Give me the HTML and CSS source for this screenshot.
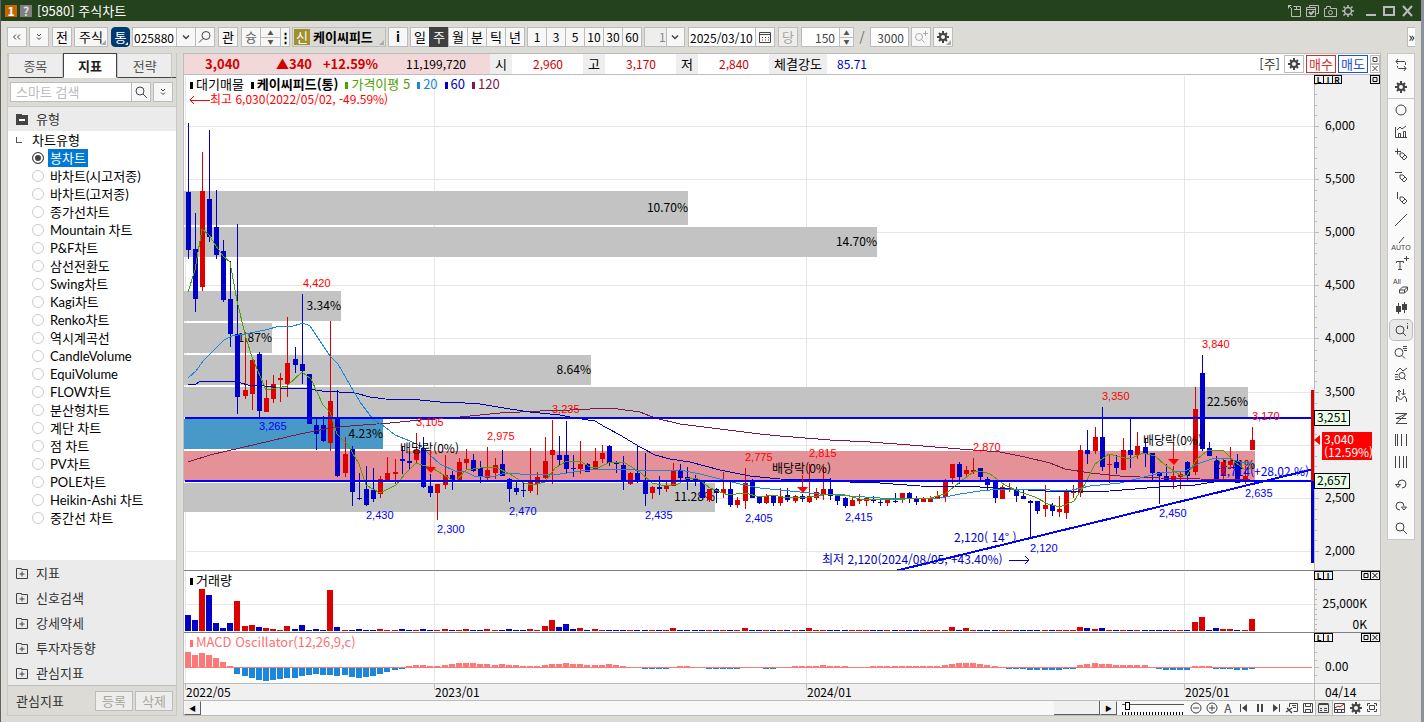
FILE: index.html
```html
<!DOCTYPE html>
<html lang="ko">
<head>
    <meta charset="UTF-8">
    <meta name="viewport" content="width=device-width, initial-scale=1.0">
    <title>[9580] 주식차트</title>
    <link rel="stylesheet" href="styles.css">
</head>
<body>
    <!-- shared icons -->
    <svg class="sprite" aria-hidden="true">
        <symbol id="gear" viewBox="0 0 16 16">
            <circle cx="8" cy="8" r="3" fill="none" stroke="currentColor" stroke-width="2"/>
            <path d="M8 2v3M8 11v3M2 8h3M11 8h3M4 4l1.500 1.500M10.500 10.500L12 12M12 4l-1.500 1.500M5.500 10.500L4 12" stroke="currentColor" stroke-width="2"/>
        </symbol>
        <symbol id="mag" viewBox="0 0 16 16"><circle cx="7" cy="7" r="4"/><path d="M10 10l4 4"/></symbol>
        <symbol id="magleft" viewBox="0 0 16 16"><circle cx="9" cy="6.500" r="4"/><path d="M6 9.500l-4 4"/></symbol>
        <symbol id="plusbox" viewBox="0 0 16 16"><path d="M2.500 3.500h5v1h6v9h-11zM8 6.500v5M5.500 9h5"/></symbol>
        <symbol id="down" viewBox="0 0 16 16"><path d="M5 6.500l3 3 3-3" stroke-width="1.500"/></symbol>
        <symbol id="ddown" viewBox="0 0 16 16"><path d="M6 5l2 2 2-2M6 8.500l2 2 2-2"/></symbol>
        <symbol id="pencil" viewBox="0 0 16 16"><path d="M7 7h3l4 4-3 3-4-4zM9 12l3-3"/></symbol>
        <symbol id="square" viewBox="0 0 8 7"><path d="M2 1.500h4v4H2z"/></symbol>
        <symbol id="cross" viewBox="0 0 8 7"><path d="M1.500 1l5 5M6.500 1l-5 5"/></symbol>
    </svg>

    <header class="titlebar">
        <span class="badge badge-num">1</span>
        <span class="badge badge-help">?</span>
        <h1 class="title">[9580] 주식차트</h1>
        <div class="win-buttons">
            <button aria-label="분리"><svg viewBox="0 0 16 16"><path d="M5.500 5.500v8h9v-10h-7M8 6.500h6M2 2l4 4M2.500 5.500v-3h3M10.500 4v2"/></svg></button>
            <button aria-label="복사"><svg viewBox="0 0 16 16"><path d="M5.500 4V2.500h9v8h-2M2.500 4.500h9v9h-9zM2.500 6.500h9"/><path d="M5 9l2 2 3-3" stroke-width="2"/></svg></button>
            <button aria-label="캡처"><svg viewBox="0 0 16 16"><path d="M2.500 5.500h2v-2h4v2h6v8h-12z"/><circle cx="8.500" cy="9.500" r="2"/></svg></button>
            <button aria-label="설정"><svg viewBox="0 0 16 16"><circle cx="8" cy="8" r="3.500" stroke-width="1.500"/><path d="M8 2v2M8 12v2M2 8h2M12 8h2M3.500 3.500L5 5M11 11l1.500 1.500M12.500 3.500L11 5M5 11l-1.500 1.500" stroke-width="1.500"/></svg></button>
            <button aria-label="최소화" class="big first"><svg viewBox="0 0 16 16"><path d="M3 12h10"/></svg></button>
            <button aria-label="최대화" class="big"><svg viewBox="0 0 16 16"><path d="M3 4h10v8H3z"/></svg></button>
            <button aria-label="닫기" class="big"><svg viewBox="0 0 16 16"><path d="M4 3l9 10M13 3L4 13"/></svg></button>
        </div>
    </header>

    <nav class="toolbar">
        <button class="tb" aria-label="접기"><svg viewBox="0 0 16 16"><path d="M7 5.500L4.500 8 7 10.500M11 5.500L8.500 8l2.500 2.500"/></svg></button>
        <button class="tb" aria-label="펼치기"><svg><use href="#ddown"/></svg></button>
        <button class="tb gap-left">전</button>
        <button class="tb w34 corner">주식</button>
        <button class="tb tong corner gap-left">통</button>
        <div class="joined">
            <input class="field code" type="text" value="025880" aria-label="종목코드">
            <button class="tb" aria-label="최근 종목"><svg><use href="#down"/></svg></button>
            <button class="tb" aria-label="종목 찾기"><svg><use href="#magleft"/></svg></button>
        </div>
        <button class="tb gap-left">관</button>
        <div class="joined gap-left">
            <button class="tb gray">슝</button>
            <span class="spin"><button aria-label="위">▲</button><button aria-label="아래">▼</button></span>
            <button class="tb w10" aria-label="더보기">⋮</button>
        </div>
        <button class="stock corner"><span class="sin">신</span><b>케이씨피드</b></button>
        <button class="tb"><b>i</b></button>
        <div class="joined">
            <button class="tb">일</button>
            <button class="tb active">주</button>
            <button class="tb">월</button>
            <button class="tb">분</button>
            <button class="tb">틱</button>
            <button class="tb">년</button>
        </div>
        <div class="joined minutes">
            <button class="tb">1</button>
            <button class="tb">3</button>
            <button class="tb">5</button>
            <button class="tb">10</button>
            <button class="tb">30</button>
            <button class="tb">60</button>
        </div>
        <div class="selectbox">
            <select aria-label="주기" disabled><option>1</option></select>
            <svg><use href="#down"/></svg>
        </div>
        <div class="joined gap-left">
            <input class="field date" type="text" value="2025/03/10" aria-label="날짜">
            <button class="tb" aria-label="달력"><svg viewBox="0 0 16 16"><path d="M2.500 3.500h11v10h-11zM2.500 5.500h11"/><path d="M5 8.500h7M5 11h7" stroke-dasharray="1 2"/></svg></button>
        </div>
        <button class="tb dim gap-left">당</button>
        <div class="joined gap-left">
            <input class="field num" type="text" value="150" aria-label="봉 개수">
            <span class="spin small"><button aria-label="증가">▲</button><button aria-label="감소">▼</button></span>
        </div>
        <span class="slash">/</span>
        <input class="field num" type="text" value="3000" aria-label="전체 개수">
        <button class="tb faint" aria-label="확대"><svg viewBox="0 0 16 16"><circle cx="6" cy="8" r="3.500"/><path d="M8.500 10.500l3 3M10 4.500h5M12.500 2v5"/></svg></button>
        <button class="tb corner" aria-label="차트 설정"><svg><use href="#gear"/></svg></button>
        <button class="more" aria-label="더보기">»</button>
    </nav>

    <main class="main">
        <aside class="sidebar">
            <div class="tabs">
                <button>종목</button>
                <button class="on">지표</button>
                <button>전략</button>
            </div>
            <div class="search">
                <input type="text" placeholder="스마트 검색" aria-label="스마트 검색">
                <button aria-label="검색"><svg><use href="#mag"/></svg></button>
                <button class="last" aria-label="펼치기"><svg><use href="#ddown"/></svg></button>
            </div>
            <button class="group open"><svg viewBox="0 0 16 16"><path class="solid" d="M2 3h6v1h6v10H2z"/><path class="cut" d="M5 9h6"/></svg>유형</button>
            <div class="tree">
                <p class="tree-title">차트유형</p>
                <label class="sel"><input type="radio" name="type" checked><span>봉차트</span></label>
                <label><input type="radio" name="type"><span>바차트(시고저종)</span></label>
                <label><input type="radio" name="type"><span>바차트(고저종)</span></label>
                <label><input type="radio" name="type"><span>종가선차트</span></label>
                <label><input type="radio" name="type"><span>Mountain 차트</span></label>
                <label><input type="radio" name="type"><span>P&amp;F차트</span></label>
                <label><input type="radio" name="type"><span>삼선전환도</span></label>
                <label><input type="radio" name="type"><span>Swing차트</span></label>
                <label><input type="radio" name="type"><span>Kagi차트</span></label>
                <label><input type="radio" name="type"><span>Renko차트</span></label>
                <label><input type="radio" name="type"><span>역시계곡선</span></label>
                <label><input type="radio" name="type"><span>CandleVolume</span></label>
                <label><input type="radio" name="type"><span>EquiVolume</span></label>
                <label><input type="radio" name="type"><span>FLOW차트</span></label>
                <label><input type="radio" name="type"><span>분산형차트</span></label>
                <label><input type="radio" name="type"><span>계단 차트</span></label>
                <label><input type="radio" name="type"><span>점 차트</span></label>
                <label><input type="radio" name="type"><span>PV차트</span></label>
                <label><input type="radio" name="type"><span>POLE차트</span></label>
                <label><input type="radio" name="type"><span>Heikin-Ashi 차트</span></label>
                <label><input type="radio" name="type"><span>중간선 차트</span></label>
            </div>
            <button class="group"><svg><use href="#plusbox"/></svg>지표</button>
            <button class="group"><svg><use href="#plusbox"/></svg>신호검색</button>
            <button class="group"><svg><use href="#plusbox"/></svg>강세약세</button>
            <button class="group"><svg><use href="#plusbox"/></svg>투자자동향</button>
            <button class="group"><svg><use href="#plusbox"/></svg>관심지표</button>
            <div class="side-foot">
                <span>관심지표</span>
                <button>등록</button>
                <button>삭제</button>
            </div>
        </aside>

        <section class="chart">
            <div class="quote">
                <div class="quote-now">
                    <b>3,040</b><b>▲340</b><b>+12.59%</b><span>11,199,720</span>
                </div>
                <span class="key">시</span><span class="val">2,960</span>
                <span class="key">고</span><span class="val">3,170</span>
                <span class="key">저</span><span class="val">2,840</span>
                <span class="key wide">체결강도</span><span class="val blue">85.71</span>
                <div class="quote-right">
                    <span>[주]</span>
                    <button aria-label="설정"><svg><use href="#gear"/></svg></button>
                    <button class="buy">매수</button>
                    <button class="sell">매도</button>
                    <span class="mini">
                        <button aria-label="최대화"><svg><use href="#square"/></svg></button>
                        <button aria-label="닫기"><svg><use href="#cross"/></svg></button>
                    </span>
                </div>
            </div>

            <div class="pane">
                <p class="legend">
                    <span>대기매물</span>
                    <b>케이씨피드(통)</b>
                    <span class="ma5">가격이평 5</span>
                    <span class="ma20">20</span>
                    <span class="ma60">60</span>
                    <span class="ma120">120</span>
                </p>
                <svg id="price" viewBox="184 75 1196 496"></svg>
                <div class="pane-left"><button>L</button><button>I</button><button>R</button></div>
                <div class="pane-right"><button aria-label="최대화"><svg><use href="#square"/></svg></button></div>
            </div>
            <div class="pane">
                <p class="legend"><span>거래량</span></p>
                <svg id="volume" viewBox="184 571 1196 62"></svg>
                <div class="pane-left"><button>L</button><button>I</button></div>
                <div class="pane-right">
                    <button aria-label="최대화"><svg><use href="#square"/></svg></button>
                    <button aria-label="닫기"><svg><use href="#cross"/></svg></button>
                </div>
            </div>
            <div class="pane">
                <p class="legend"><span class="macd">MACD Oscillator(12,26,9,c)</span></p>
                <svg id="macd" viewBox="184 633 1196 50"></svg>
                <div class="pane-left"><button>L</button><button>I</button></div>
                <div class="pane-right">
                    <button aria-label="최대화"><svg><use href="#square"/></svg></button>
                    <button aria-label="닫기"><svg><use href="#cross"/></svg></button>
                </div>
            </div>
            <svg id="dates" viewBox="184 683 1196 18"></svg>

            <div class="bottom">
                <div class="scrollbar">
                    <button aria-label="왼쪽">◀</button>
                    <span class="thumb"></span>
                    <button aria-label="오른쪽">▶</button>
                </div>
                <input class="zoom" type="range" min="0" max="20" value="1" aria-label="봉 간격">
                <button aria-label="축소"><svg viewBox="0 0 16 16"><circle cx="8" cy="8" r="5"/><path d="M5 8h6"/></svg></button>
                <button aria-label="확대"><svg viewBox="0 0 16 16"><circle cx="8" cy="8" r="5"/><path d="M5 8h6M8 5v6"/></svg></button>
                <button>A</button>
                <button aria-label="처음"><svg viewBox="0 0 16 16"><path d="M4.500 4v8"/><path class="solid" d="M11 4v8L6 8z"/></svg></button>
                <button aria-label="정지"><svg viewBox="0 0 16 16"><path class="thick" d="M6 4v8M10 4v8"/></svg></button>
                <button aria-label="끝"><svg viewBox="0 0 16 16"><path d="M11.500 4v8"/><path class="solid" d="M5 4v8l5-4z"/></svg></button>
                <button aria-label="지우기"><svg viewBox="0 0 16 16"><path d="M5.500 7V3.500h8v8h-4M8 5.500h4M9 7.500h3"/><path d="M3 8l5 5M8 8l-6 4" stroke-width="1.500"/></svg></button>
                <button aria-label="저장"><svg viewBox="0 0 16 16"><path d="M3.500 3.500h9v9h-9zM5.500 3.500v3h5v-3M5.500 12.500v-3h5v3"/></svg></button>
                <button class="pressed" aria-label="목록"><svg viewBox="0 0 16 16"><path d="M2.500 4.500h10v8h-10zM2.500 3.500h10M4 8.500h2M4 10.500h2M8 8.500h3M8 10.500h3"/></svg></button>
                <button aria-label="지표 창"><svg viewBox="0 0 16 16"><path d="M2.500 3.500h10v9h-10zM2.500 9.500h10M5.500 10v2M9.500 10v2"/><path class="red" d="M3 8l3-2 2 1 4-3"/></svg></button>
                <button aria-label="설정"><svg><use href="#gear"/></svg></button>
                <button aria-label="전체 화면"><svg viewBox="0 0 16 16"><path d="M5.500 5.500h5v4h-5zM3.500 6V3.500H6M10 3.500h2.500V6M12.500 9v2.500H10M6 11.500H3.500V9"/></svg></button>
            </div>
        </section>

        <aside class="tools">
            <button aria-label="새로고침"><svg viewBox="0 0 16 16"><path d="M5 2L3 4.500 5 7M3 4.500h8.500l1 1V8M11 9l2 2.500-2 2.500M13 11.500H5.500l-1-1V9"/></svg></button>
            <button aria-label="설정"><svg><use href="#gear"/></svg></button>
            <hr>
            <button aria-label="원"><svg viewBox="0 0 16 16"><circle cx="8" cy="8" r="5"/></svg></button>
            <button aria-label="차트"><svg viewBox="0 0 16 16"><path d="M2.500 3v10.500H14M4 6l3-3 2 2 4-3M5.500 13V9.500h2V13M10.500 13V7.500h2V13"/></svg></button>
            <button aria-label="추가 그리기"><svg viewBox="0 0 16 16"><use href="#pencil"/><path d="M2 5.500h6M4.500 2.500v6"/></svg></button>
            <button aria-label="수평선"><svg viewBox="0 0 16 16"><use href="#pencil"/><path d="M2 4.500h7"/></svg></button>
            <button aria-label="수직선"><svg viewBox="0 0 16 16"><use href="#pencil"/><path d="M4.500 2v7"/></svg></button>
            <button aria-label="추세선"><svg viewBox="0 0 16 16"><path d="M2 14L14 2"/></svg></button>
            <button aria-label="자동 추세선" class="auto"><svg viewBox="0 0 16 10"><path d="M6 9l5-6"/></svg>AUTO</button>
            <button aria-label="문자"><svg viewBox="0 0 16 16"><path d="M3.500 7V5.500h7V7M7 6v8M5 13.500h4M11 2.500h5M13.500 0v5"/></svg></button>
            <button aria-label="모두 지우기" class="all">All<svg viewBox="0 0 16 10"><path d="M6.500 5l3-3h5v3l-3 3h-5zM6.500 5h5l3-3M11.500 5v3"/></svg></button>
            <button aria-label="봉"><svg viewBox="0 0 16 16"><path d="M5.500 3v11M11.500 2v11"/><path class="solid" d="M3 6h5v6H3zM9 4h5v6H9z"/></svg></button>
            <button aria-label="정보" class="pressed"><svg viewBox="0 0 16 16"><circle cx="7" cy="8" r="4"/><path d="M10 11l3 3M14.500 1v1M14.500 3.500V7"/></svg></button>
            <button aria-label="목록 보기"><svg viewBox="0 0 16 16"><circle cx="6" cy="8.500" r="4"/><path d="M9 11.500l3 3M10 2.500h4M10 4.500h4M11 6.500h3"/></svg></button>
            <button aria-label="차트 찾기"><svg viewBox="0 0 16 16"><circle cx="9" cy="9.500" r="3"/><path d="M11 12l2 2M3 6l4-4 3 3 4-3M2 8.500h3M2 11h3M2 13.500h5"/></svg></button>
            <button aria-label="파동"><svg viewBox="0 0 16 16"><path d="M3.500 14V8l4 4 4-4 2 3v3M6 8V2M4 4l2-2 2 2M10.500 1v6M8.500 5l2 2 2-2"/></svg></button>
            <button aria-label="지그재그"><svg viewBox="0 0 16 16"><path d="M2 3.500h12L3 8.500h10M14 3.500L3 13.500h11"/></svg></button>
            <button aria-label="간격 1"><svg viewBox="0 0 16 16"><path d="M2.500 2v12M4.500 2v12M8.500 2v12M13.500 2v12"/></svg></button>
            <button aria-label="간격 2"><svg viewBox="0 0 16 16"><path d="M2.500 2v12M6.500 2v12M10.500 2v12M13.500 2v12"/></svg></button>
            <button aria-label="되돌리기"><svg viewBox="0 0 16 16"><path d="M5 8a4 4 0 1 1 4 4M2.500 8.500l2.500 3 2.500-3z"/></svg></button>
            <button aria-label="다시"><svg viewBox="0 0 16 16"><path d="M7 12a4 4 0 1 1 4-4M8.500 9l2.500 3 2.500-3z"/></svg></button>
            <button aria-label="돋보기"><svg><use href="#mag"/></svg></button>
        </aside>
    </main>
    <script src="script.js"></script>
</body>
</html>
```
FILE: styles.css
```css
*{
    box-sizing: border-box;
}
body{
    margin: 0;
    min-height: 100vh;
    display: flex;
    flex-direction: column;
    background-color: #dcdbd6;
    border-left: 1px solid #606060;
    border-right: 3px solid #8c929c;
    font-family: "Noto Sans CJK KR", sans-serif;
    font-size: 13px;
    line-height: 16px;
    color: #000;
}
button, input, select{
    font: inherit;
    color: inherit;
    margin: 0;
    padding: 0;
    border: 0;
    border-radius: 0;
    background: none;
    min-width: 0;
}
button{
    display: flex;
    align-items: center;
    justify-content: center;
    white-space: nowrap;
}
p, h1{
    margin: 0;
}
svg{
    display: block;
    flex: none;
    width: 16px;
    height: 16px;
    fill: none;
    stroke: #444;
    color: #444;
}
.sprite{
    position: absolute;
    width: 0;
    height: 0;
}
.solid{
    fill: #444;
    stroke: none;
}
.cut{
    stroke: #fff;
    stroke-width: 2;
}
.thick{
    stroke-width: 2;
}
.red{
    stroke: #c00;
}

/* title bar */
.titlebar{
    height: 21px;
    display: flex;
    align-items: center;
    gap: 3px;
    padding: 0 6px 0 4px;
    background-color: #24431c;
    color: #fff;
}
.badge{
    width: 12px;
    height: 12px;
    line-height: 12px;
    font-size: 12px;
    text-align: center;
    font-weight: bold;
}
.badge-num{
    background-color: #c86400;
}
.badge-help{
    background-color: #808080;
    color: #ddd;
}
.title{
    font-size: 13px;
    font-weight: normal;
    margin-left: 2px;
}
.win-buttons{
    margin-left: auto;
    display: flex;
    gap: 2px;
}
.win-buttons svg{
    stroke: #bbb;
}
.win-buttons .big svg{
    stroke-width: 2;
}
.win-buttons .first{
    margin-left: 5px;
}

/* toolbar */
.toolbar{
    display: flex;
    gap: 2px;
    height: 32px;
    padding: 6px 6px;
    position: relative;
}
.tb{
    width: 20px;
    height: 20px;
    flex: none;
    border: 1px solid #bcbcbc;
    background-color: #f7f7f7;
    position: relative;
}
.gap-left{
    margin-left: 1px;
}
.w34{
    width: 34px;
}
.w10{
    width: 10px;
    font-weight: bold;
}
.corner::after{
    content: "";
    position: absolute;
    right: 1px;
    bottom: 1px;
    border-left: 5px solid transparent;
    border-bottom: 5px solid #aaa;
}
.tong{
    width: 19px;
    background-color: #003a70;
    border-color: #003a70;
    border-radius: 4px;
    color: #fff;
}
.tong::after{
    border-bottom-color: #fff;
    border-width: 3px;
}
.joined{
    display: flex;
}
.joined > * + *{
    margin-left: -1px;
}
.minutes{
    font-size: 12px;
}
.field{
    height: 20px;
    border: 1px solid #bcbcbc;
    background-color: #fff;
    padding: 0 1px;
    font-size: 12px;
}
.code{
    width: 45px;
}
.date{
    width: 68px;
}
.num{
    width: 39px;
    padding-right: 4px;
    text-align: right;
    color: #444;
}
.spin{
    width: 21px;
    display: grid;
    grid-template-rows: 1fr 1fr;
    border: 1px solid #bcbcbc;
    background-color: #f7f7f7;
    font-size: 6px;
    line-height: 8px;
    color: #555;
}
.spin button + button{
    border-top: 1px solid #bcbcbc;
}
.spin.small{
    width: 15px;
}
.gray{
    color: #666;
}
.dim{
    background-color: #eee;
    color: #a8a698;
}
.faint svg{
    stroke: #aaa;
}
.stock{
    width: 94px;
    height: 20px;
    gap: 3px;
    justify-content: flex-start;
    position: relative;
    border: 1px solid #bcbcbc;
    background-color: #dcdbd6;
}
.sin{
    width: 16px;
    height: 16px;
    line-height: 16px;
    margin-left: 1px;
    background-color: #a09030;
    color: #fff;
}
.active{
    background-color: #404040;
    border-color: #404040;
    color: #fff;
}
.selectbox{
    position: relative;
    width: 41px;
    height: 20px;
    border: 1px solid #bcbcbc;
    background-color: #f7f7f7;
}
.selectbox select{
    appearance: none;
    width: 22px;
    height: 18px;
    padding-left: 14px;
    background-color: #eee;
    border-right: 1px solid #bcbcbc;
    font-size: 12px;
    color: #888;
    opacity: 1;
}
.selectbox svg{
    position: absolute;
    right: 1px;
    top: 1px;
}
.slash{
    width: 12px;
    text-align: center;
    color: #666;
    line-height: 20px;
}
.more{
    margin-left: auto;
    width: 8px;
    height: 20px;
    border: 1px solid #bcbcbc;
    border-right: 0;
    background-color: #fff;
}

.main{
    flex: 1;
    display: grid;
    grid-template-columns: 170px 1fr 28px;
    gap: 6px;
    padding: 0 6px 6px;
    align-items: start;
}

/* left panel */
.sidebar{
    height: 100%;
    display: flex;
    flex-direction: column;
    border: 1px solid #c8c8c8;
    border-top: 0;
    background-color: #dcdbd6;
    color: #333;
}
.tabs{
    display: flex;
    height: 25px;
    padding-right: 4px;
    border-bottom: 1px solid #444;
}
.tabs button{
    flex: 1;
    height: 25px;
    border: 1px solid #c8c8c8;
    border-bottom: 1px solid #444;
    background-color: #ededed;
    color: #555;
}
.tabs .on{
    background-color: #fff;
    border-color: #444;
    border-bottom-color: #fff;
    color: #222;
    font-weight: bold;
}
.search{
    display: flex;
    height: 28px;
    padding: 4px 3px 4px 2px;
}
.search input{
    flex: 1;
    border: 1px solid #bcbcbc;
    background-color: #fff;
    padding-left: 5px;
}
.search input::placeholder{
    color: #bbb;
}
.search button{
    width: 20px;
    border: 1px solid #bcbcbc;
    margin-left: -1px;
    background-color: #f7f7f7;
}
.search .last{
    margin-left: 2px;
}
.group{
    height: 25px;
    justify-content: flex-start;
    gap: 6px;
    padding-left: 6px;
    background-color: #ebebeb;
}
.group.open{
    border-top: 1px solid #c8c8c8;
}
.tree{
    flex: 1;
    background-color: #fff;
    color: #000;
    font-family: Lato, "Noto Sans CJK KR", sans-serif;
    line-height: 18px;
}
.tree-title{
    padding-left: 24px;
    position: relative;
}
.tree-title::before{
    content: "";
    position: absolute;
    left: 8px;
    top: 6px;
    width: 5px;
    height: 5px;
    border-left: 1px solid #555;
    border-bottom: 1px solid #555;
}
.tree label{
    display: flex;
    align-items: center;
    height: 18px;
    gap: 4px;
    padding-left: 24px;
}
.tree label span{
    padding: 0 2px;
}
.tree input{
    appearance: none;
    width: 12px;
    height: 12px;
    border: 1px solid #ccc;
    border-radius: 50%;
    background-color: #fff;
}
.tree input:checked{
    border-color: #444;
    background-color: #444;
    box-shadow: inset 0 0 0 2px #fff;
}
.sel span{
    background-color: #0078d7;
    color: #fff;
}
.side-foot{
    display: flex;
    align-items: center;
    gap: 2px;
    height: 30px;
    padding: 0 3px 0 8px;
    border-top: 1px solid #bcbcbc;
}
.side-foot span{
    flex: 1;
}
.side-foot button{
    width: 38px;
    height: 20px;
    border: 1px solid #bcbcbc;
    background-color: #ededed;
    color: #a8a698;
}

/* chart window */
.chart{
    border: 1px solid #bcbcbc;
    background-color: #fff;
    min-width: 0;
}
.quote{
    display: flex;
    height: 21px;
    line-height: 20px;
    border-bottom: 1px solid #bcbcbc;
}
.quote-now{
    width: 306px;
    display: grid;
    grid-template-columns: 56px 72px 66px 88px;
    text-align: right;
    background-color: #f2d8d8;
    color: #d00000;
}
.quote-now span{
    font-size: 12px;
    color: #000;
}
.key{
    width: 22px;
    text-align: center;
    background-color: #eee;
}
.key.wide{
    width: 58px;
}
.val{
    width: 71px;
    padding-right: 20px;
    text-align: right;
    font-size: 12px;
    color: #d00000;
}
.val.blue{
    width: 60px;
    color: #0000c0;
}
.quote-right{
    margin-left: auto;
    display: flex;
    align-items: center;
    gap: 2px;
    color: #333;
}
.quote-right > span:first-child{
    margin-right: 2px;
}
.quote-right > button{
    width: 30px;
    height: 18px;
    border: 1px solid #bcbcbc;
}
.quote-right > button:nth-child(2){
    width: 20px;
}
.quote-right > .buy{
    border-color: #d03030;
    color: #d03030;
}
.quote-right > .sell{
    border-color: #2050d0;
    color: #2050d0;
}
.mini{
    width: 10px;
    display: grid;
}
.mini button{
    height: 9px;
    border: 1px solid #bcbcbc;
}
.mini svg, .pane-right svg{
    width: 8px;
    height: 7px;
}
.pane{
    position: relative;
}
.chart > svg, .pane > svg{
    width: 100%;
    height: auto;
    stroke: none;
}
/* titles and small buttons lie over the plot */
.legend{
    position: absolute;
    left: 6px;
    top: 1px;
    display: flex;
    gap: 7px;
}
.legend > *::before{
    content: "";
    display: inline-block;
    width: 3px;
    height: 7px;
    margin-right: 3px;
    background-color: currentColor;
}
.ma5{
    color: #50a000;
}
.ma20{
    color: #1a86dc;
}
.ma60{
    color: #0000c8;
}
.ma120{
    color: #7a1850;
}
.macd{
    color: #ff7070;
}
.pane-left, .pane-right{
    position: absolute;
    top: 0;
    display: flex;
}
.pane-left{
    right: 37px;
    width: 29px;
}
.pane-right{
    right: 0;
}
.pane-left button, .pane-right button{
    width: 10px;
    height: 9px;
    margin-right: -1px;
    border: 1px solid #000;
    background-color: #f0f0f0;
    font-size: 8px;
    line-height: 7px;
    font-weight: bold;
}
.pane-right button:last-child{
    margin-right: 0;
}
.pane-right svg{
    stroke: #000;
}

/* chart drawing */
.num-lg{
    font-size: 12px;
}
.num-sm{
    font-family: "Liberation Sans", sans-serif;
    font-size: 11px;
}
.end{
    text-anchor: end;
}
.ink{
    fill: #000;
}
.up{
    fill: #ff0000;
}
.down{
    fill: #0000ff;
}
.navy{
    fill: #0000c8;
}
.white{
    fill: #fff;
}

/* bottom strip */
.bottom{
    display: flex;
    height: 14px;
    background-color: #f8f8f8;
}
.bottom > button{
    width: 16px;
    height: 14px;
    font-size: 12px;
    color: #444;
}
.scrollbar{
    flex: 1;
    display: flex;
    justify-content: space-between;
    background-color: #f8f8f8;
}
.scrollbar button{
    width: 17px;
    border: 1px solid #f8f8f8;
    border-right-color: #606060;
    border-bottom-color: #606060;
    background-color: #f0f0f0;
    font-size: 7px;
}
.thumb{
    width: 46px;
    margin-left: auto;
    background-color: #f0f0f0;
    border-right: 1px solid #606060;
    border-bottom: 1px solid #606060;
}
.zoom{
    appearance: none;
    width: 62px;
    margin: 0 4px 0 5px;
    background: repeating-linear-gradient(90deg, #000 0 1px, transparent 1px 3px) 0 100% / 100% 3px no-repeat, linear-gradient(#555, #555) 0 3px / 100% 1px no-repeat;
}
.zoom::-webkit-slider-thumb{
    appearance: none;
    width: 5px;
    height: 8px;
    margin-bottom: 4px;
    border: 1px solid #000;
    background-color: #fff;
}
.pressed{
    background-color: #e8e8e8;
    outline: 1px solid #bcbcbc;
}

/* right tools */
.tools{
    display: flex;
    flex-direction: column;
    align-items: center;
    border: 1px solid #c8c8c8;
    background-color: #fafafa;
}
.tools button{
    width: 22px;
    height: 22px;
}
.tools hr{
    width: 100%;
    margin: 0;
    border: 0;
    border-top: 1px solid #c8c8c8;
}
.tools .pressed{
    height: 20px;
    margin: 1px 0;
    border-radius: 4px;
}
.tools .auto, .tools .all{
    flex-direction: column;
    font-family: "Liberation Sans", sans-serif;
    font-size: 7px;
    line-height: 7px;
    color: #444;
}
.tools .auto svg, .tools .all svg{
    height: 10px;
}
.tools .all{
    padding-left: 3px;
    align-items: flex-start;
}
```
FILE: script.js
```js
const RED = '#dc0000';
const BLUE = '#0000c8';
const GRID = '#e6e6e6';
const AXIS = '#bcbcbc';

// direction, high, body top, body bottom, low
const candles = [
    ['d',123,192,250,259],['d',213,249,299,312],['u',152,191,287,291],['d',130,199,237,242],['d',190,227,255,259],
    ['d',240,251,300,302],['d',261,299,334,347],['d',224,334,397,414],['u',332,390,396,399],['u',357,360,394,410],
    ['d',352,354,411,417],['u',380,398,412,412],['u',375,384,399,403],['u',373,378,380,402],['u',317,363,384,397],
    ['d',347,359,365,373],['d',294,364,371,384],['d',374,374,424,424],['d',418,425,434,450],['d',416,425,441,442],
    ['u',321,401,443,451],['d',390,418,476,477],['u',437,454,473,477],['d',446,449,492,506],['d',473,498,499,500],
    ['d',466,489,505,506],['d',468,490,499,502],['u',476,479,494,498],['u',457,473,480,480],['u',459,472,474,484],
    ['d',446,459,461,474],['d',452,461,463,469],['u',433,450,460,463],['d',437,448,487,488],['d',474,486,493,497],
    ['u',484,484,493,520],['u',455,475,485,489],['d',471,475,481,490],['u',458,462,480,480],['u',449,459,463,470],
    ['d',454,460,471,472],['d',461,468,476,483],['u',447,470,478,480],['u',458,465,473,479],['d',450,464,476,476],
    ['d',478,479,489,502],['d',482,488,492,495],['d',483,490,491,497],['u',448,481,491,493],['u',472,477,484,495],
    ['u',437,461,478,479],['u',420,450,455,484],['d',436,455,460,465],['d',421,455,469,473],['d',455,468,469,477],
    ['u',441,464,469,474],['d',463,464,472,472],['u',448,461,469,470],['u',445,453,459,463],['d',445,446,463,466],
    ['d',461,463,464,473],['d',456,465,481,490],['u',472,473,484,485],['d',445,473,482,483],['d',453,481,494,506],
    ['u',486,487,493,499],['d',476,487,489,495],['u',480,486,489,492],['u',463,470,486,486],['d',464,470,478,482],
    ['d',467,477,480,490],['d',475,479,481,486],['d',480,480,498,498],['u',489,489,500,502],['d',488,489,493,503],
    ['u',472,489,493,498],['d',482,489,505,507],['u',497,500,505,508],['u',468,483,501,509],['d',479,481,498,498],
    ['d',496,497,503,504],['u',494,496,503,504],['d',495,496,503,506],['u',488,496,503,506],['d',488,495,500,502],
    ['u',495,496,501,503],['d',494,496,499,502],['u',464,496,502,503],['u',488,492,498,500],['u',466,489,495,500],
    ['d',478,489,496,500],['d',495,496,501,505],['d',497,498,506,508],['u',496,500,506,506],['u',494,499,501,504],
    ['u',497,498,501,506],['d',496,499,501,503],['d',500,502,503,506],['u',499,500,503,506],['d',493,501,502,503],
    ['u',493,493,499,503],['d',492,493,499,503],['d',496,498,502,505],['u',497,499,502,502],['u',496,498,502,502],
    ['u',491,496,499,499],['u',479,481,497,502],['u',464,464,478,484],['d',462,464,477,484],['u',466,470,474,478],
    ['u',458,470,472,474],['d',468,468,477,480],['d',477,479,485,490],['d',481,482,498,503],['u',485,487,499,499],
    ['u',483,488,489,492],['d',487,489,496,502],['d',489,496,499,499],['d',500,501,503,538],['d',501,501,511,514],
    ['u',485,505,509,517],['d',503,505,511,516],['u',496,509,512,517],['u',489,491,513,519],['u',485,491,493,498],
    ['u',445,450,493,497],['d',430,450,454,464],['u',427,437,451,454],['d',407,437,467,471],['u',455,464,465,483],
    ['d',455,462,468,474],['u',438,450,470,470],['d',418,450,455,468],['u',432,446,455,459],['d',438,447,454,467],
    ['d',453,453,473,480],['d',472,472,476,504],['d',464,476,480,480],['u',466,476,480,489],['u',471,474,477,489],
    ['d',461,462,476,481],['u',387,409,472,475],['d',355,373,449,451],['d',442,448,456,456],['d',456,461,479,479],
    ['u',458,462,475,480],['u',447,461,465,469],['d',454,461,483,483],['u',466,476,481,484],['u',427,440,450,450]
];

// volume at price: top, height, right end, share, label baseline, fill
const profile = [
    [191,34,688,'10.70%',212],[227,30,877,'14.70%',246],[291,30,341,'3.34%',310],[323,30,272,'1.87%',342],
    [355,30,591,'8.64%',374],[387,30,1248,'22.56%',406],[419,30,383,'4.23%',438,'#4898c8'],
    [451,30,1255,'24.71%',469,'#e49298'],[483,29,715,'11.28%',501]
];

const ma5 = '188,292 195,270 202,229 209,235 216,246 223,256 230,262 237,301 246,338 252,357 266,390 287,386 302,372 311,379 323,405 330,412 337,434 348,445 359,464 366,485 380,493 396,485 405,474 416,463 432,468 444,475 455,482 466,470 480,468 495,467 510,474 524,483 533,485 545,482 555,468 567,461 580,461 590,467 598,468 610,462 625,463 640,472 652,483 666,486 678,484 688,478 698,479 710,488 728,495 745,493 760,497 775,495 785,498 810,497 830,494 845,495 860,499 880,500 905,499 930,498 945,494 960,482 973,472 980,471 990,474 1005,485 1020,492 1035,497 1048,504 1060,507 1074,501 1085,484 1095,464 1109,454 1120,457 1130,459 1143,453 1155,456 1165,465 1180,475 1187,475 1197,459 1207,451 1223,450 1235,462 1245,470 1252,468';
const ma20 = '188,378 196,371 203,361 215,349 224,340 232,336 245,334 265,330 280,326 290,327 303,323 310,326 320,341 330,356 338,364 350,385 360,402 372,418 385,427 395,435 410,441 422,447 430,455 440,464 455,471 466,472 474,476 495,476 505,473 520,474 560,474 580,471 600,469 625,469 645,471 680,470 700,474 720,479 740,484 760,488 780,490 800,492 820,494 850,496 880,498 900,499 940,498 960,494 980,491 1000,489 1025,489 1050,490 1072,490 1090,486 1120,483 1140,478 1160,473 1185,471 1200,463 1215,458 1230,459 1240,462 1252,462';
const ma60 = '188,384 196,384 201,381 234,381 248,385 265,386 280,388 308,389 322,391 355,393 370,397 385,399 420,400 440,402 465,403 480,404 510,409 530,412 560,415 575,418 595,421 605,427 620,435 640,447 655,455 670,459 690,462 720,470 750,476 780,479 830,480 850,482 880,483 920,486 980,487 1010,489 1045,491 1060,492 1110,491 1160,487 1195,485 1220,481 1252,480';
const ma120 = '188,462 210,455 240,448 270,441 300,434 330,428 350,426 390,423 420,420 450,418 470,416 500,413 540,411 570,410 610,408 640,412 655,418 680,424 720,429 760,434 780,436 830,440 870,442 910,445 960,449 1000,452 1025,457 1050,463 1065,469 1090,473 1120,476 1160,478 1200,479 1250,480';

const highs = [[303,287,'4,420'],[416,426,'3,105'],[487,440,'2,975'],[552,413,'3,235'],[745,461,'2,775'],[809,457,'2,815'],[973,451,'2,870'],[1102,400,'3,350'],[1202,348,'3,840'],[1252,420,'3,170']];
const lows = [[259,430,'3,265'],[366,519,'2,430'],[437,533,'2,300'],[509,515,'2,470'],[645,519,'2,435'],[745,522,'2,405'],[845,521,'2,415'],[1030,552,'2,120'],[1159,517,'2,450'],[1245,497,'2,635']];
const months = [[185,'2022/05'],[434,'2023/01'],[806,'2024/01'],[1184,'2025/01']];

function xAt(i){
    return Math.floor(188 + 7.142 * i);
}
function rect(x, y, w, h, fill){
    return `<rect x="${x}" y="${y}" width="${w}" height="${h}" fill="${fill}"/>`;
}
function text(x, y, str, cls){
    return `<text x="${x}" y="${y}" class="${cls}">${str}</text>`;
}
function line(points, color, width){
    return `<polyline points="${points}" fill="none" stroke="${color}" stroke-width="${width}" shape-rendering="crispEdges"/>`;
}
function frame(top, height){
    let s = '';
    months.forEach(m => s += rect(m[0], top + 1, 1, height - 2, GRID));
    s += rect(1314, top, 66, height, '#f0f0f0') + rect(1314, top, 1, height, AXIS);
    return s;
}

function drawPrice(){
    let s = frame(75, 496);
    for (let p = 6000; p >= 2000; p -= 500){
        const y = Math.round(126 + (6000 - p) * 0.1062);
        s += rect(185, y, 1129, 1, GRID) + rect(1315, y, 4, 1, AXIS);
        for (let k = 1; k < 5; k++) s += rect(1315, Math.round(y - k * 10.6), 2, 1, AXIS);
        if (p !== 3000) s += text(1325, y + 4, p.toLocaleString('en-US'), 'num-lg ink');
    }
    profile.forEach(b => {
        s += rect(184, b[0], b[2] - 184, b[1], b[5] || '#c3c3c3');
        s += text(b[2], b[4], b[3], 'num-lg ink end');
    });
    candles.forEach((c, i) => {
        const x = xAt(i);
        const color = c[0] === 'u' ? RED : BLUE;
        s += rect(x, c[1], 1, Math.max(1, c[4] - c[1]), color);
        s += rect(x - 2, c[2], 5, Math.max(1, c[3] - c[2]), color);
    });
    s += line(ma120, '#7a1850', 1) + line(ma60, '#0000b4', 1) + line(ma20, '#1a86dc', 1) + line(ma5, '#50a000', 1);
    s += rect(185, 417, 1129, 2, '#0000ff') + rect(185, 480, 1129, 2, '#0000ff');
    s += line('895,571 1314,469', '#0000ff', 2);
    s += rect(1311, 390, 3, 91, RED) + rect(1311, 481, 3, 82, BLUE);
    highs.forEach(t => s += text(t[0], t[1], t[2], 'num-sm up'));
    lows.forEach(t => s += text(t[0], t[1], t[2], 'num-sm down'));

    // dividend marks
    [[400,453,430,450,467],[772,473,802,475,487],[1143,445,1173,446,459]].forEach(d => {
        s += text(d[0], d[1], '배당락(0%)', 'num-lg ink');
        s += rect(d[2], d[3], 1, d[4] - d[3], 'red');
        s += `<path d="M${d[2] - 5} ${d[4]}h11l-5 6z" fill="red"/>`;
    });
    s += text(210, 104, '최고 6,030(2022/05/02, -49.59%)', 'num-lg up');
    s += line('210,100 190,100', 'red', 1) + line('194,96 190,100 194,104', 'red', 1);
    s += text(954, 542, '2,120( 14° )', 'num-lg navy');
    s += text(822, 564, '최저 2,120(2024/08/05, +43.40%)', 'num-lg navy');
    s += line('1009,560 1029,560', BLUE, 1) + line('1025,556 1029,560 1025,564', BLUE, 1);
    s += text(1220, 476, '2,714(+28.02 %)', 'num-lg down');

    // axis tags
    [[410,'3,251'],[473,'2,657']].forEach(t => {
        s += rect(1314, t[0], 36, 16, '#000') + rect(1315, t[0] + 1, 34, 14, '#e6ffe6');
        s += text(1317, t[0] + 12, t[1], 'num-lg ink');
    });
    s += rect(1322, 432, 50, 28, 'red') + '<path d="M1314 440l6-5v10z" fill="red"/>';
    s += text(1324, 444, '3,040', 'num-lg white') + text(1324, 457, '(12.59%)', 'num-lg white');
    s += rect(184, 570, 1196, 1, '#808080');
    document.getElementById('price').innerHTML = s;
}

function drawVolume(){
    const big = {0:16,1:11,2:42,3:36,4:8,5:3,6:8,7:30,8:5,9:6,10:4,11:3,14:5,16:6,20:41,21:4,50:5,51:11,52:4,53:7,55:3,68:3,78:3,87:3,107:4,109:3,125:4,126:3,127:2,128:3,141:9,142:14,144:3,145:2,146:2,149:12};
    let s = frame(571, 62);
    s += rect(185, 604, 1129, 1, GRID);
    candles.forEach((c, i) => {
        const h = big[i] || 1 + (i < 60 && i % 3 === 0 ? 1 : 0);
        const color = c[0] === 'u' || i === 7 || i === 142 ? RED : BLUE;
        s += rect(xAt(i) - 3, 631 - h, 6, h, color);
    });
    for (let y = 589; y < 632; y += 5) s += rect(1315, y, 2, 1, AXIS);
    s += text(1367, 608, '25,000K', 'num-lg ink end') + text(1367, 629, '0K', 'num-lg ink end');
    s += rect(184, 632, 1196, 1, '#808080');
    document.getElementById('volume').innerHTML = s;
}

function drawMacd(){
    const osc = [15,12,14,12,9,5,1,-7,-9,-11,-13,-14,-13,-12,-11,-11,-9,-8,-7,-8,-8,-9,-8,-10,-11,-10,-9,-7,-5,-3,-2,1,2,2,1,1,2,3,4,4,4,3,3,2,3,2,2,1,1,1,2,3,3,4,3,3,2,2,2,3,2,1,-1,-1,-2,-2,-2,-2,-1,1,1,-1,-1,-2,-2,-2,-2,-2,-1,-1,-1,-2,-2,-1,-1,1,1,1,1,2,1,1,1,-1,-1,-1,1,1,1,1,1,1,1,1,1,1,2,3,4,4,4,3,2,1,-1,-2,-2,-2,-3,-3,-3,-3,-3,-2,-2,2,3,4,3,3,2,2,2,2,2,-1,-2,-3,-3,-3,-3,1,1,1,-2,-2,-2,-3,-3,-2];
    let s = frame(633, 50);
    osc.forEach((v, i) => {
        s += rect(xAt(i) - 3, v > 0 ? 667 - v : 667, 6, Math.abs(v), v > 0 ? '#ff7878' : '#1a86dc');
    });
    s += rect(185, 667, 1127, 1, '#ff7878') + rect(1315, 667, 4, 1, AXIS);
    [652,660,675].forEach(y => s += rect(1315, y, 2, 1, AXIS));
    s += text(1325, 671, '0.00', 'num-lg ink');
    document.getElementById('macd').innerHTML = s;
}

function drawDates(){
    let s = rect(184, 683, 1196, 18, '#f0f0f0') + rect(184, 683, 1196, 1, AXIS) + rect(184, 700, 1196, 1, AXIS);
    s += rect(1314, 683, 1, 18, AXIS);
    months.forEach(m => s += rect(m[0], 684, 1, 6, AXIS) + text(m[0] + 1, 697, m[1], 'num-lg ink'));
    s += text(1325, 697, '04/14', 'num-lg ink');
    document.getElementById('dates').innerHTML = s;
}

drawPrice();
drawVolume();
drawMacd();
drawDates();
```
